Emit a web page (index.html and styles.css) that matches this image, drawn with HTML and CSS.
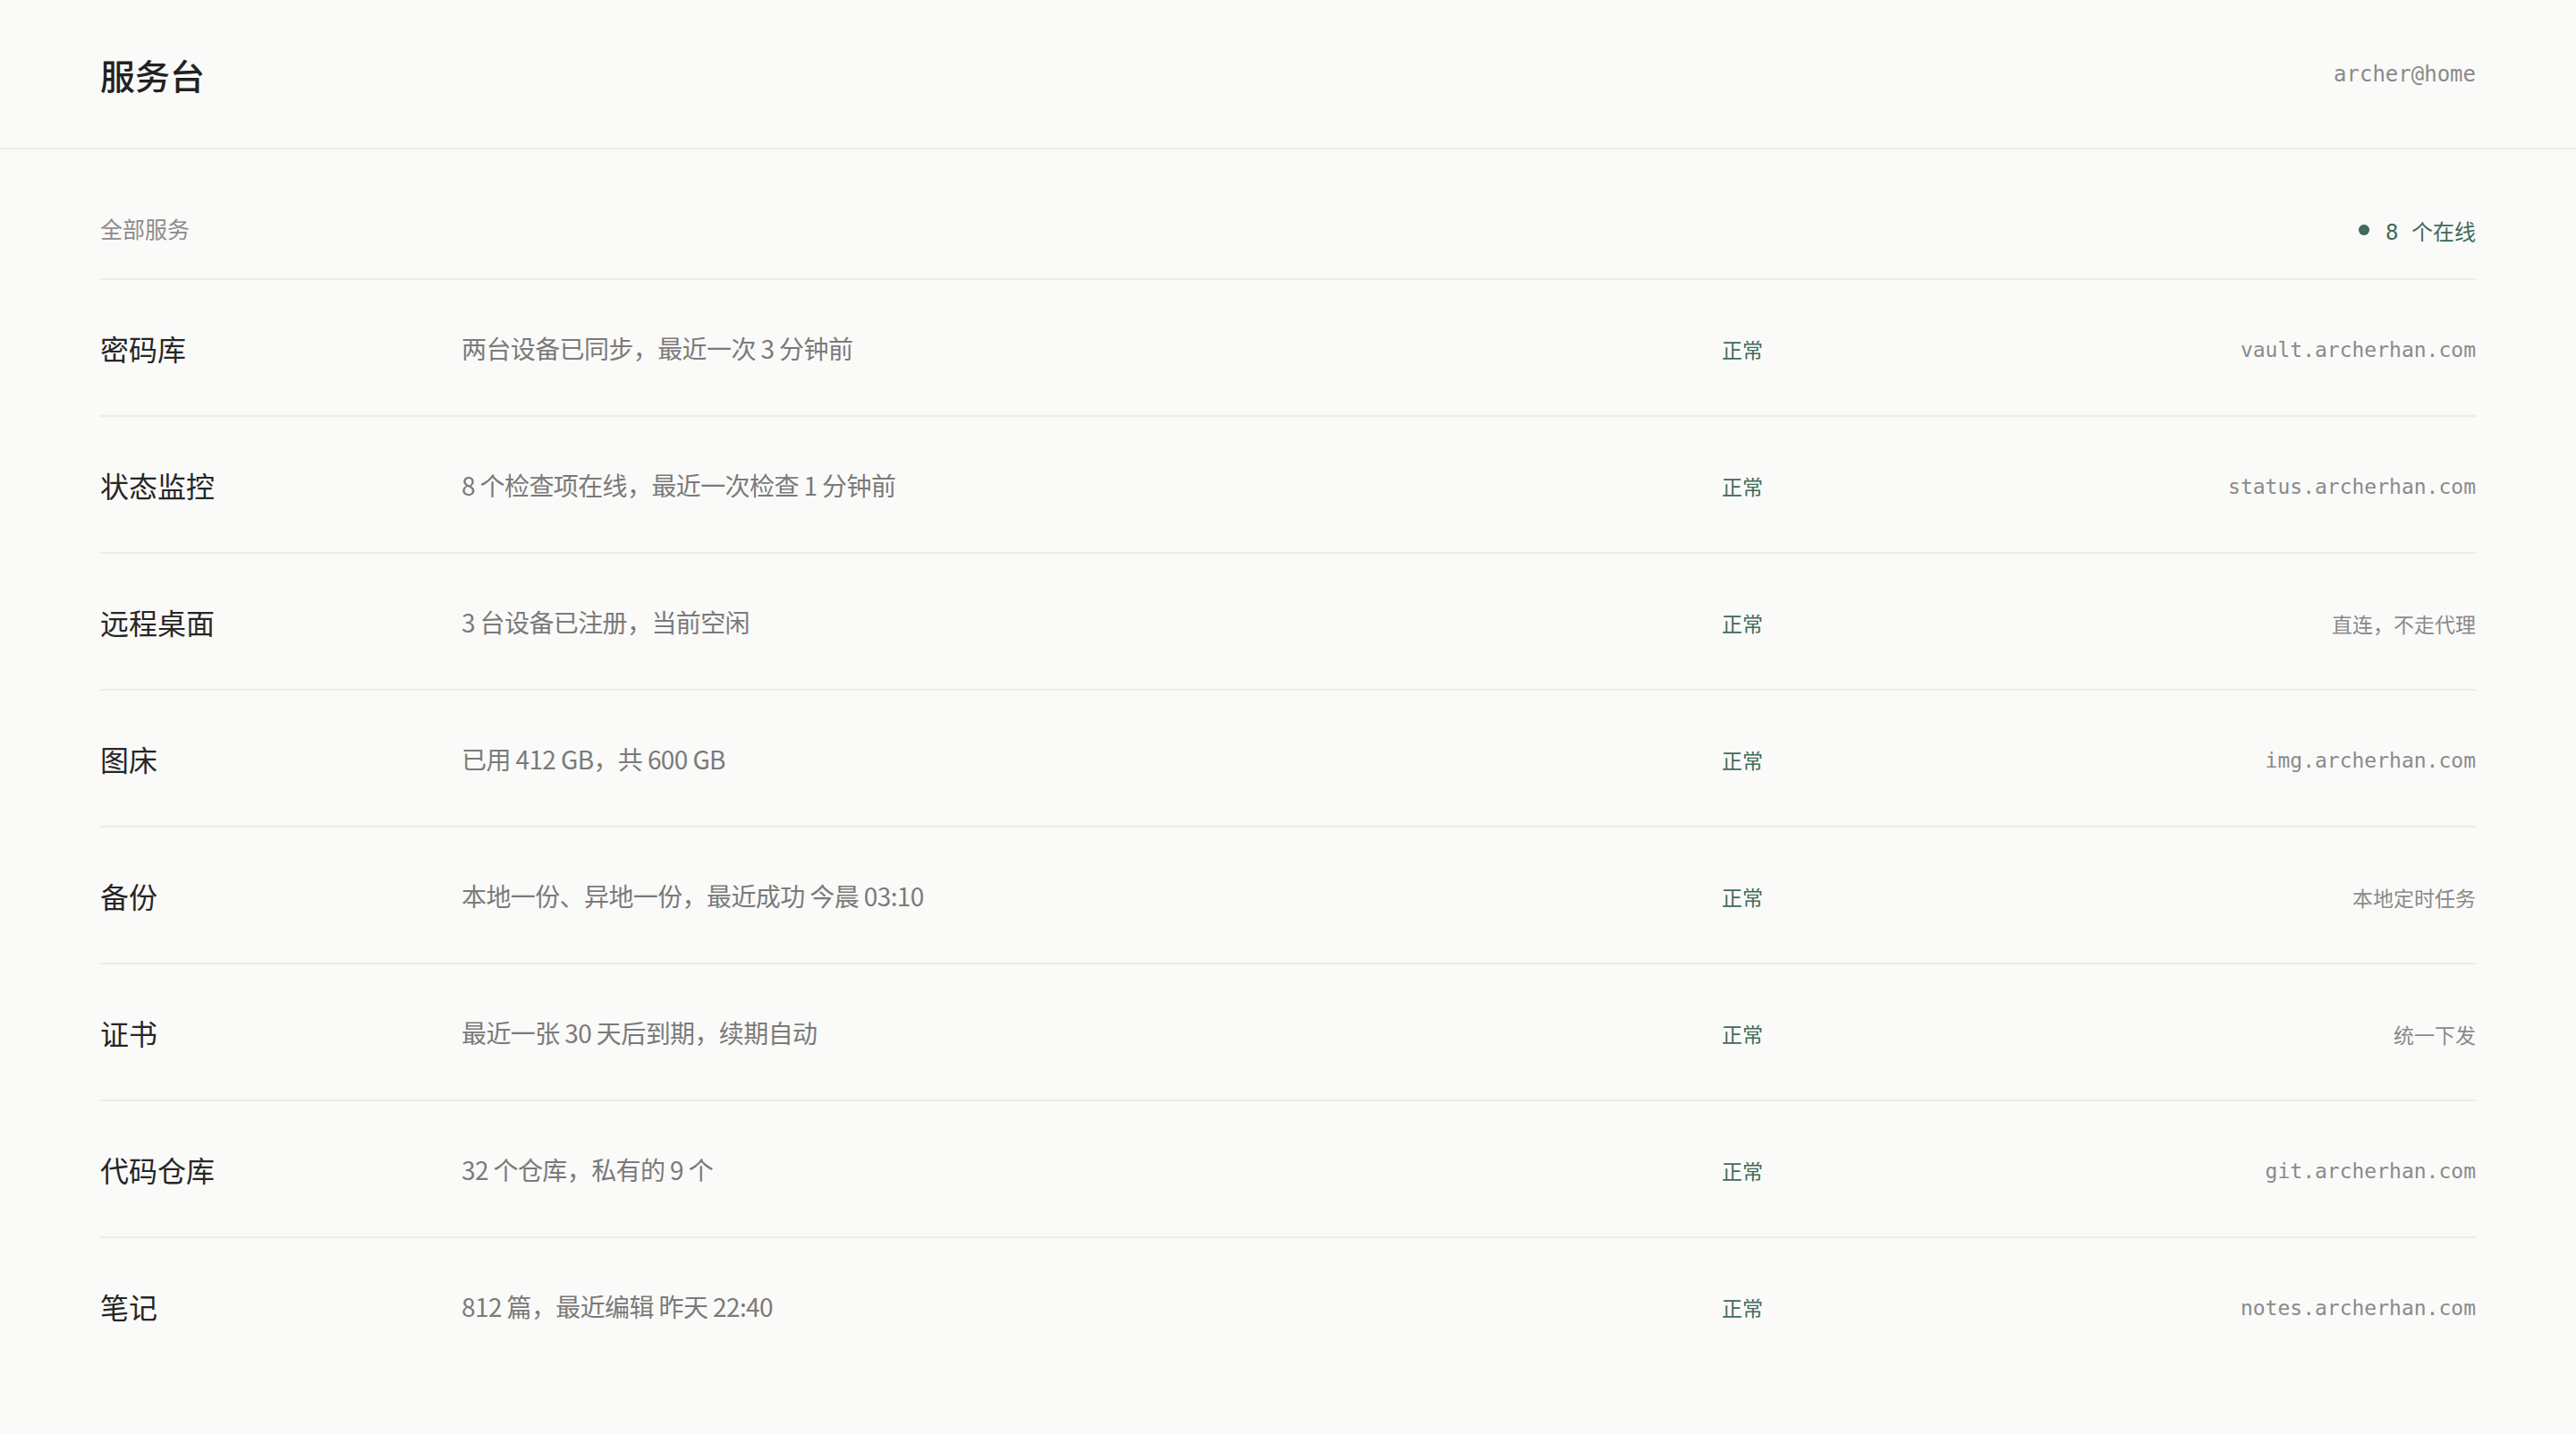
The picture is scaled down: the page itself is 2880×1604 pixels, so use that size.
FILE: index.html
```html
<!DOCTYPE html>
<html lang="zh-CN">
<head>
  <meta charset="UTF-8" />
  <meta name="viewport" content="width=device-width, initial-scale=1.0"/>
  <title>服务台</title>
  <link rel="stylesheet" href="styles.css">
</head>
<body>

  <!-- Top bar -->
  <header class="topbar">
    <h1 class="title">服务台</h1>
    <span class="who">archer@home</span>
  </header>

  <main class="main">
    <div class="list-head">
      <span class="list-label">全部服务</span>
      <span class="online"><span class="dot"></span>8 个在线</span>
    </div>

    <!-- Service rows -->
    <ul class="services">
      <li class="service">
        <span class="name">密码库</span>
        <span class="desc">两台设备已同步，最近一次 3 分钟前</span>
        <span class="state">正常</span>
        <span class="addr">vault.archerhan.com</span>
      </li>
      <li class="service">
        <span class="name">状态监控</span>
        <span class="desc">8 个检查项在线，最近一次检查 1 分钟前</span>
        <span class="state">正常</span>
        <span class="addr">status.archerhan.com</span>
      </li>
      <li class="service">
        <span class="name">远程桌面</span>
        <span class="desc">3 台设备已注册，当前空闲</span>
        <span class="state">正常</span>
        <span class="addr">直连，不走代理</span>
      </li>
      <li class="service">
        <span class="name">图床</span>
        <span class="desc">已用 412 GB，共 600 GB</span>
        <span class="state">正常</span>
        <span class="addr">img.archerhan.com</span>
      </li>
      <li class="service">
        <span class="name">备份</span>
        <span class="desc">本地一份、异地一份，最近成功 今晨 03:10</span>
        <span class="state">正常</span>
        <span class="addr">本地定时任务</span>
      </li>
      <li class="service">
        <span class="name">证书</span>
        <span class="desc">最近一张 30 天后到期，续期自动</span>
        <span class="state">正常</span>
        <span class="addr">统一下发</span>
      </li>
      <li class="service">
        <span class="name">代码仓库</span>
        <span class="desc">32 个仓库，私有的 9 个</span>
        <span class="state">正常</span>
        <span class="addr">git.archerhan.com</span>
      </li>
      <li class="service">
        <span class="name">笔记</span>
        <span class="desc">812 篇，最近编辑 昨天 22:40</span>
        <span class="state">正常</span>
        <span class="addr">notes.archerhan.com</span>
      </li>
    </ul>
  </main>

</body>
</html>
```

FILE: styles.css
```css
body {
  margin: 0;
  background: #fafaf9;
  color: #262626;
  font-family: "Noto Sans CJK SC", "Noto Sans", sans-serif;
}
.topbar {
  height: 165px;
  padding: 0 112px;
  display: flex;
  align-items: center;
  justify-content: space-between;
  border-bottom: 2px solid #ebebea;
}
.title {
  margin: 0;
  font-size: 39px;
  font-weight: 500;
  color: #222;
}
.who {
  font-family: "DejaVu Sans Mono", "Noto Sans CJK SC", monospace;
  font-size: 24px;
  color: #8a8a8a;
}
.main {
  padding: 70px 112px 0;
}
.list-head {
  display: flex;
  align-items: center;
  justify-content: space-between;
  height: 36px;
  padding-bottom: 38px;
  border-bottom: 2px solid #ebebea;
}
.list-label {
  font-size: 25px;
  color: #8c8c8c;
}
.online {
  display: flex;
  align-items: center;
  padding-top: 4px;
  font-family: "DejaVu Sans Mono", "Noto Sans CJK SC", monospace;
  font-size: 24px;
  color: #3e6b5a;
  white-space: pre;
}
.dot {
  width: 12px;
  height: 12px;
  border-radius: 50%;
  background: #3e6b5a;
  margin-right: 18px;
}
.services {
  list-style: none;
  margin: 0;
  padding: 0;
}
.service {
  display: grid;
  grid-template-columns: 404px 1409px 1fr auto;
  align-items: center;
  height: 151px;
  border-bottom: 2px solid #ebebea;
}
.service:last-child {
  border-bottom: none;
}
.name {
  font-size: 32px;
  color: #262626;
}
.desc {
  font-size: 28px;
  letter-spacing: -0.6px;
  color: #7a7a7a;
}
.state {
  padding-top: 2px;
  font-family: "DejaVu Sans Mono", "Noto Sans CJK SC", monospace;
  font-size: 23px;
  color: #3e6b5a;
}
.addr {
  padding-top: 4px;
  font-family: "DejaVu Sans Mono", "Noto Sans CJK SC", monospace;
  font-size: 23px;
  color: #8a8a8a;
  text-align: right;
}
```
